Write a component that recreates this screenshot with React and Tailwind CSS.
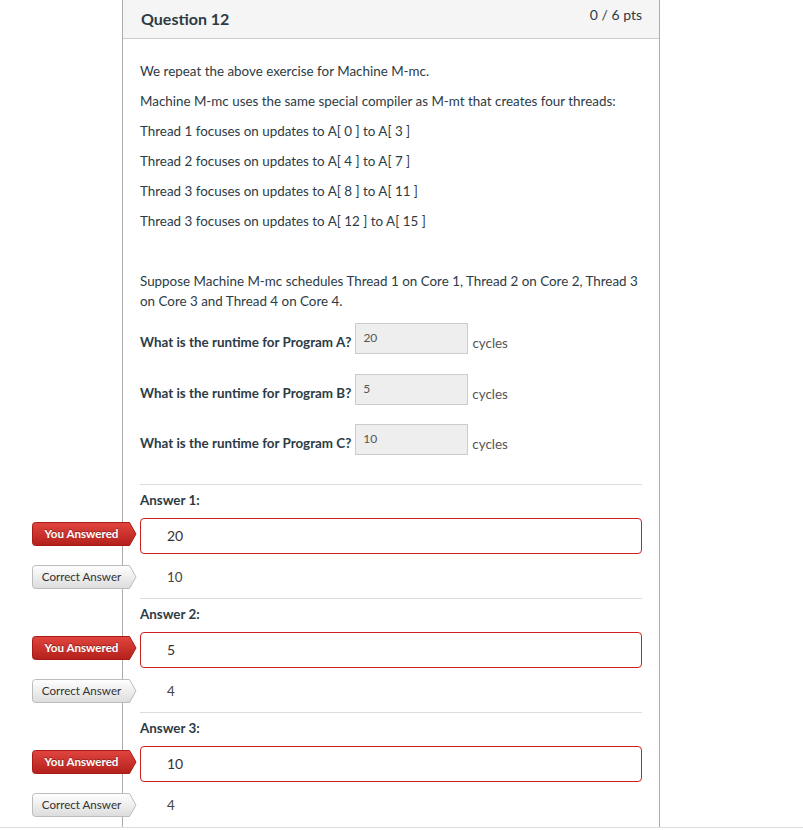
import React from 'react';

const threads = [
  'Thread 1 focuses on updates to A[ 0 ] to A[ 3 ]',
  'Thread 2 focuses on updates to A[ 4 ] to A[ 7 ]',
  'Thread 3 focuses on updates to A[ 8 ] to A[ 11 ]',
  'Thread 3 focuses on updates to A[ 12 ] to A[ 15 ]',
];

const runtimes = [
  { prog: 'A', value: '20', mt: 'mt-0' },
  { prog: 'B', value: '5', mt: 'mt-[20px]' },
  { prog: 'C', value: '10', mt: 'mt-[19px]' },
];

const answers = [
  { label: 'Answer 1:', given: '20', correct: '10' },
  { label: 'Answer 2:', given: '5', correct: '4' },
  { label: 'Answer 3:', given: '10', correct: '4' },
];

const Badge = ({ red, children, className }) => (
  <div className={`absolute left-[-108px] w-[105px] h-[24px] ${className}`}>
    <svg width="105" height="24" viewBox="0 0 105 24" className="absolute inset-0">
      <defs>
        <linearGradient id={red ? 'gRed' : 'gGray'} x1="0" y1="0" x2="0" y2="1">
          {red ? (
            <>
              <stop offset="0" stopColor="#e2453f" />
              <stop offset="1" stopColor="#b3201c" />
            </>
          ) : (
            <>
              <stop offset="0" stopColor="#ffffff" />
              <stop offset="1" stopColor="#dcdcdc" />
            </>
          )}
        </linearGradient>
      </defs>
      <path
        d="M3.5 0.5 H97.5 L104 12 L97.5 23.5 H3.5 Q0.5 23.5 0.5 20.5 V3.5 Q0.5 0.5 3.5 0.5 Z"
        fill={`url(#${red ? 'gRed' : 'gGray'})`}
        stroke={red ? '#a81c18' : '#bcbcbc'}
        strokeWidth="1"
      />
    </svg>
    <span
      className={`relative flex h-full items-center justify-center pr-[6px] text-[11.6px] ${
        red ? 'font-bold text-white [text-shadow:0_-1px_0_rgba(0,0,0,0.35)]' : 'text-[#333]'
      }`}
    >
      {children}
    </span>
  </div>
);

export default function App() {
  return (
    <div className="h-[828px] overflow-hidden border-b border-[#dddddd] bg-white font-['Lato','Open_Sans',sans-serif] text-[#2d3b45]">
      <div className="ml-[122px] w-[538px] h-full border-x border-[#ababab]">
        {/* header */}
        <div className="flex h-[39px] items-start justify-between border-b border-[#c7cdd1] bg-[#f5f5f5] pl-[18px] pr-[17px]">
          <h2 className="mt-[9px] text-[16px] font-bold leading-[20px]">Question 12</h2>
          <span className="mt-[5px] text-[14px] leading-[20px] text-[#2d3b45]">0 / 6 pts</span>
        </div>

        {/* body */}
        <div className="pl-[17px] pr-[17px] pt-[22px] text-[13.4px] leading-[20px]">
          <p className="mb-[10px]">We repeat the above exercise for Machine M-mc.</p>
          <p className="mb-[10px]">Machine M-mc uses the same special compiler as M-mt that creates four threads:</p>
          {threads.map((t, i) => (
            <p key={i} className="mb-[10px]">{t}</p>
          ))}
          <p className="mb-[10px] h-[20px]"></p>
          <p className="mb-[12px]">
            Suppose Machine M-mc schedules Thread 1 on Core 1, Thread 2 on Core 2, Thread 3 on Core 3 and Thread 4 on Core 4.
          </p>

          {runtimes.map((r) => (
            <div key={r.prog} className={`flex items-start ${r.mt}`}>
              <span className="mt-[9px] font-bold">What is the runtime for Program {r.prog}?</span>
              <div className="ml-[4px] h-[31px] w-[113px] border border-[#cccccc] bg-[#eeeeee] pl-[7px] pt-[7px] text-[12px] leading-[14px] text-[#555]">
                {r.value}
              </div>
              <span className="ml-[4px] mt-[10px] text-[#555]">cycles</span>
            </div>
          ))}

          <div className="mt-[29px]">
            {answers.map((a) => (
              <div key={a.label} className="border-t border-[#dddddd]">
                <div className="mt-[5px] font-bold">{a.label}</div>
                <div className="relative mt-[8px]">
                  <Badge red className="top-[4px]">You Answered</Badge>
                  <div className="flex h-[36px] items-center rounded-[4px] border border-[#cc1f1f] pl-[26px] text-[14px] text-[#333]">
                    {a.given}
                  </div>
                </div>
                <div className="relative pb-[11px] pt-[13px]">
                  <Badge className="top-[11px]">Correct Answer</Badge>
                  <div className="pl-[27px] text-[13.4px] text-[#444]">{a.correct}</div>
                </div>
              </div>
            ))}
          </div>
        </div>
      </div>
    </div>
  );
}
